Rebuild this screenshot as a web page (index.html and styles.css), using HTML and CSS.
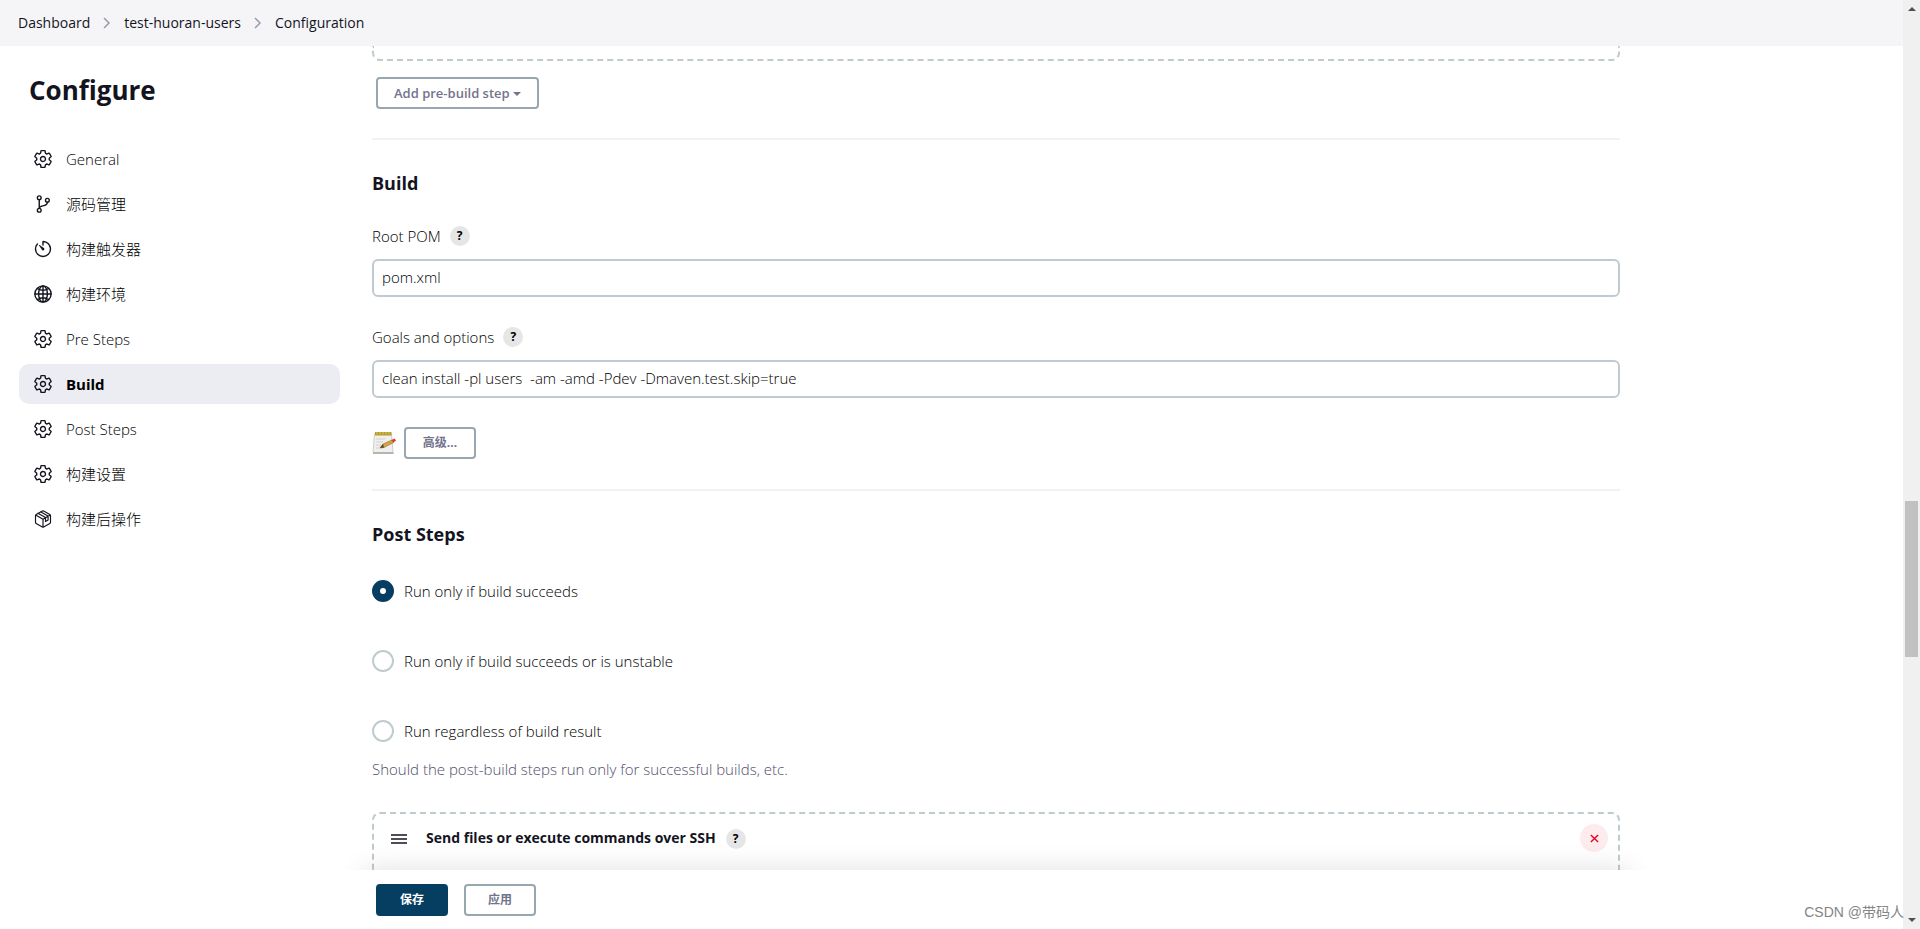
FILE: index.html
```html
<!DOCTYPE html>
<html lang="zh-CN">
<head>
<meta charset="utf-8">
<title>Configuration</title>
<link rel="stylesheet" href="styles.css">
</head>
<body>
<svg class="sprite" aria-hidden="true">
  <symbol id="gear" viewBox="0 0 512 512"><path d="M262.29 192.31a64 64 0 1057.4 57.4 64.13 64.13 0 00-57.4-57.4zM416.39 256a154.34 154.34 0 01-1.53 20.79l45.21 35.46a10.81 10.81 0 012.45 13.75l-42.77 74a10.81 10.81 0 01-13.14 4.59l-44.9-18.08a16.11 16.11 0 00-15.17 1.75A164.48 164.48 0 01325 400.8a15.94 15.94 0 00-8.82 12.14l-6.73 47.89a11.08 11.08 0 01-10.68 9.17h-85.54a11.11 11.11 0 01-10.69-8.87l-6.72-47.82a16.07 16.07 0 00-9-12.22 155.3 155.3 0 01-21.46-12.57 16 16 0 00-15.11-1.71l-44.89 18.07a10.81 10.81 0 01-13.14-4.58l-42.77-74a10.8 10.8 0 012.45-13.75l38.21-30a16.05 16.05 0 006-14.08c-.36-4.17-.58-8.33-.58-12.5s.21-8.27.58-12.35a16 16 0 00-6.07-13.94l-38.19-30A10.81 10.81 0 0149.48 186l42.77-74a10.81 10.81 0 0113.14-4.59l44.9 18.08a16.11 16.11 0 0015.17-1.75A164.48 164.48 0 01187 111.2a15.94 15.94 0 008.82-12.14l6.73-47.89A11.08 11.08 0 01213.23 42h85.54a11.11 11.11 0 0110.69 8.87l6.72 47.82a16.07 16.07 0 009 12.22 155.3 155.3 0 0121.46 12.57 16 16 0 0015.11 1.71l44.89-18.07a10.81 10.81 0 0113.14 4.58l42.77 74a10.8 10.8 0 01-2.45 13.75l-38.21 30a16.05 16.05 0 00-6.05 14.08c.33 4.14.55 8.3.55 12.47z"/></symbol>
  <symbol id="branch" viewBox="0 0 512 512"><circle cx="160" cy="96" r="48"/><circle cx="160" cy="416" r="48"/><circle cx="368" cy="160" r="48"/><path d="M160 368V144M368 208c0 128-208 64-208 160"/></symbol>
  <symbol id="timer" viewBox="0 0 512 512"><path d="M112.91 128A191.85 191.85 0 0064 254c-1.18 106.35 85.65 193.8 192 194 106.2.2 192-85.83 192-192 0-104.54-83.55-189.61-187.5-192a4.36 4.36 0 00-4.5 4.37V152"/><path class="solid" d="M233.38 278.63l-79-113a8.13 8.13 0 0111.32-11.32l113 79a32.5 32.5 0 01-37.25 53.26 33.21 33.21 0 01-8.07-7.94z"/></symbol>
  <symbol id="globe" viewBox="0 0 512 512"><circle cx="256" cy="256" r="208"/><path d="M256 48c-58 0-113 93-113 208s55 208 113 208 113-93 113-208S314 48 256 48zM117 117c38 27 87 43 139 43s101-16 139-43M395 395c-38-27-87-43-139-43s-101 16-139 43M256 48v416M464 256H48"/></symbol>
  <symbol id="box" viewBox="0 0 512 512"><path d="M448 341V171a32 32 0 00-16-28L272 52a32 32 0 00-32 0L80 143a32 32 0 00-16 28v170a32 32 0 0016 28l160 91a32 32 0 0032 0l160-91a32 32 0 0016-28zM69 153l187 110 187-110M256 463V263M127 107l193 112v100l66-38V181L191 71"/></symbol>
  <symbol id="chevron" viewBox="0 0 10 16"><path d="M2 3l5 5-5 5"/></symbol>
</svg>
<div class="window">
  <div class="page">
    <header class="crumbs">
      <a href="#">Dashboard</a>
      <svg class="sep" aria-hidden="true"><use href="#chevron"/></svg>
      <a href="#">test-huoran-users</a>
      <svg class="sep" aria-hidden="true"><use href="#chevron"/></svg>
      <a href="#">Configuration</a>
    </header>
    <div class="body">
      <aside class="side">
        <h1>Configure</h1>
        <nav>
          <a href="#"><svg class="icon"><use href="#gear"/></svg>General</a>
          <a href="#"><svg class="icon"><use href="#branch"/></svg>源码管理</a>
          <a href="#"><svg class="icon"><use href="#timer"/></svg>构建触发器</a>
          <a href="#"><svg class="icon"><use href="#globe"/></svg>构建环境</a>
          <a href="#"><svg class="icon"><use href="#gear"/></svg>Pre Steps</a>
          <a href="#" class="active"><svg class="icon"><use href="#gear"/></svg>Build</a>
          <a href="#"><svg class="icon"><use href="#gear"/></svg>Post Steps</a>
          <a href="#"><svg class="icon"><use href="#gear"/></svg>构建设置</a>
          <a href="#"><svg class="icon fine"><use href="#box"/></svg>构建后操作</a>
        </nav>
      </aside>
      <main class="main">
        <form class="form">
          <div class="chunk chunk-end"></div>
          <div class="row add-row"><button type="button" class="btn menu">Add pre-build step <span class="caret"></span></button></div>
          <section>
            <h2>Build</h2>
            <div class="label-row"><label for="pom">Root POM</label><button type="button" class="help" aria-label="Help: Root POM">?</button></div>
            <input class="text" id="pom" type="text" value="pom.xml">
            <div class="label-row second"><label for="goals">Goals and options</label><button type="button" class="help" aria-label="Help: Goals and options">?</button></div>
            <input class="text" id="goals" type="text" value="clean install -pl users  -am -amd -Pdev -Dmaven.test.skip=true">
            <div class="row advanced">
              <svg class="notepad" viewBox="0 0 24 24" aria-hidden="true">
                <path d="M2.500 3h17l1.500 18.500H1z" fill="#efefed" stroke="#cfcfcb"/>
                <path d="M1 21h20.500v2H1z" fill="#b4b4b0"/>
                <path d="M3 1h16.500v3.500H3z" fill="#b59a2c"/>
                <path d="M5 1v2.500M8 1v2.500M11 1v2.500M14 1v2.500M17 1v2.500" stroke="#dcc65c"/>
                <path d="M4 8h9M4 11h7M4 14h5M4 17h4" stroke="#d2d2d2"/>
                <path d="M8 17l3-4 9-4 1.500 2.500-9.500 5z" fill="#dba445" stroke="#8a6424" stroke-width=".6"/>
                <path d="M8 17l3-4 1 3.500z" fill="#59452a"/>
                <path d="M19.500 9l3-1.500 1.500 2-2.500 2z" fill="#dc3a2c"/>
              </svg>
              <button type="button" class="btn">高级...</button>
            </div>
          </section>
          <section>
            <h2>Post Steps</h2>
            <div class="radios">
              <label><input type="radio" name="run" checked>Run only if build succeeds</label>
              <label><input type="radio" name="run">Run only if build succeeds or is unstable</label>
              <label><input type="radio" name="run">Run regardless of build result</label>
            </div>
            <p class="hint">Should the post-build steps run only for successful builds, etc.</p>
            <div class="chunk step">
              <svg class="grip" viewBox="0 0 16 10" aria-hidden="true"><path d="M0 1h16M0 5h16M0 9h16"/></svg>
              <strong>Send files or execute commands over SSH</strong>
              <button type="button" class="help" aria-label="Help: Send files">?</button>
              <button type="button" class="remove" aria-label="Delete"><svg viewBox="0 0 10 10"><path d="M1 1l8 8M9 1L1 9"/></svg></button>
            </div>
          </section>
        </form>
        <footer class="bar">
          <button type="button" class="btn primary">保存</button>
          <button type="button" class="btn">应用</button>
        </footer>
      </main>
    </div>
  </div>
  <div class="scroll" aria-hidden="true"><i class="up"></i><i class="thumb"></i><i class="down"></i></div>
  <div class="watermark">CSDN @带码人</div>
</div>
</body>
</html>
```
FILE: styles.css
```css
* { box-sizing: border-box; }
body { margin: 0; background: #fff; color: #000; font: 300 15px/22px "Open Sans", "Noto Sans CJK SC", sans-serif; }
button, input { font: inherit; color: inherit; }
a { color: inherit; text-decoration: none; }
.sprite { display: none; }
.window { position: relative; display: flex; height: 100vh; overflow: hidden; }
.page { flex: 1; min-width: 0; display: flex; flex-direction: column; }

.crumbs { display: flex; align-items: center; flex: none; height: 46px; padding: 0 18px; background: #f5f5f8; color: #14141f; font-size: 14px; font-weight: 400; }
.sep { width: 10px; height: 16px; margin: 0 12px; fill: none; stroke: #9a9aaa; stroke-width: 1.5; }

.body { flex: 1; min-height: 0; display: flex; }
.side { flex: none; width: 340px; padding: 24px 0 0 19px; }
h1 { margin: 0 0 29px 10px; color: #14141f; font-size: 26px; line-height: 40px; font-weight: 700; }
nav { display: flex; flex-direction: column; gap: 5px; }
nav a { display: flex; align-items: center; gap: 13px; height: 40px; padding: 0 14px 1px; border-radius: 10px; }
nav .active { background: #ecedf3; font-weight: 700; }
.icon { flex: none; width: 20px; height: 20px; fill: none; stroke: #14141f; stroke-width: 36; stroke-linecap: round; stroke-linejoin: round; overflow: visible; }
.fine { stroke-width: 30; }
.solid { fill: #14141f; stroke: none; }

.main { position: relative; flex: 0 1 1312px; min-width: 0; overflow: hidden; padding: 0 32px; }
.chunk { border: 2px dashed #bfcbcf; border-radius: 8px; }
.chunk-end { height: 15px; border-top: 0; border-radius: 0 0 8px 8px; }
.row { display: flex; align-items: center; }
.add-row { padding: 16px 4px 29px; }
.btn { min-width: 72px; height: 32px; padding: 0 16px; border: 2px solid #98a6af; border-radius: 4px; background: #fff; color: #73738c; font-size: 12px; line-height: 20px; font-weight: 700; }
.menu { font-size: 13px; font-weight: 600; }
.caret { display: inline-block; border: 4px solid transparent; border-top-color: #73738c; border-bottom: 0; vertical-align: 2px; }
section { border-top: 2px solid #f2f2f6; }
h2 { margin: 30px 0; color: #14141f; font-size: 18px; line-height: 26px; font-weight: 700; }
.label-row { display: flex; align-items: center; gap: 9px; height: 20px; margin-bottom: 13px; line-height: 20px; }
.label-row.second { margin-top: 30px; }
.help { width: 20px; height: 20px; padding: 0; border: 0; border-radius: 50%; background: #e6e6e6; font-size: 12px; line-height: 20px; font-weight: 700; }
.text { display: block; width: 100%; height: 38px; padding: 0 8px 2px; border: 2px solid #bfcbcf; border-radius: 6px; background: #fff; outline: 0; }
.advanced { gap: 8px; padding: 29px 0 30px; }
.notepad { width: 24px; height: 24px; }
.radios { display: flex; flex-direction: column; gap: 48px; padding-top: 3px; }
.radios label { display: flex; align-items: center; gap: 10px; height: 22px; }
.radios input { appearance: none; width: 22px; height: 22px; margin: 0; border: 2px solid #bfcbcf; border-radius: 50%; }
.radios input:checked { border: 8px solid #063e61; }
.hint { margin: 16px 0 32px; color: #4e4e6c; }
.step { display: flex; align-items: flex-start; height: 120px; padding: 13px 10px 0 17px; }
.grip { width: 16px; height: 10px; margin: 7px 19px 0 0; stroke: #14141f; stroke-width: 1.5; }
.step strong { color: #14141f; font-size: 14px; font-weight: 700; }
.step .help { margin: 2px 0 0 10px; }
.remove { display: grid; place-items: center; width: 28px; height: 28px; margin: -3px 0 0 auto; padding: 0; border: 0; border-radius: 50%; background: #fdebee; }
.remove svg { width: 9px; height: 9px; fill: none; stroke: #e6001f; stroke-width: 1.5; }

.bar { position: absolute; right: 0; bottom: 0; left: 0; z-index: 1; display: flex; gap: 16px; height: 59px; padding: 14px 36px; }
.bar::before { content: ""; position: absolute; inset: 0 24px; z-index: -2; box-shadow: 0 0 28px rgba(0, 0, 0, .13); }
.bar::after { content: ""; position: absolute; inset: 0; z-index: -1; background: #fff; }
.primary { border-color: #063e61; background: #063e61; color: #fff; }

.scroll { flex: none; display: flex; flex-direction: column; align-items: center; width: 17px; padding: 7px 0; background: #f0f0f0; }
.up, .down { border: 4px solid transparent; }
.up { border-top: 0; border-bottom-color: #505050; }
.down { border-bottom: 0; border-top-color: #505050; margin-top: auto; }
.thumb { width: 13px; height: 17%; margin-top: 490px; background: #c1c1c1; }
.watermark { position: absolute; right: 16px; bottom: 6px; color: #858585; font: 400 14px/22px "Liberation Sans", "Noto Sans CJK SC", sans-serif; }
```
